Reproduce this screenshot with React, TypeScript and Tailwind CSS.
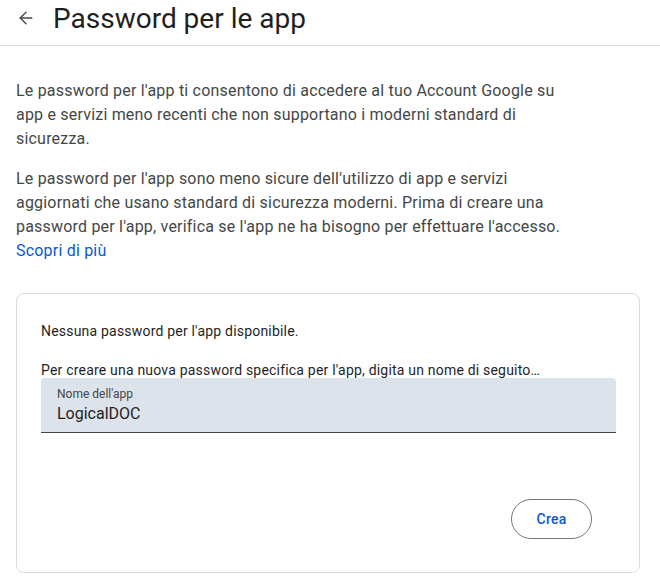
import { ArrowLeft } from 'lucide-react';

const font = { fontFamily: 'Roboto, "Noto Sans", Arial, sans-serif' };

export default function App() {
  return (
    <main className="h-[580px] w-[660px] overflow-hidden bg-white text-[#1f1f1f]" style={font}>
      <header className="flex h-[46px] items-center gap-[17px] border-b border-[#dadce0] pl-[16px]">
        <ArrowLeft size={20} strokeWidth={1.6} className="-mt-[9px] text-[#444746]" />
        <h1 className="-mt-[7px] text-[28px] leading-[36px] text-[#1f1f1f]">Password per le app</h1>
      </header>

      <section className="px-4 pt-[33px] text-[16px] leading-[24px] tracking-[0.2px] text-[#444746]">
        <p className="max-w-[552px]">
          Le password per l'app ti consentono di accedere al tuo Account Google su app e servizi meno recenti che non
          supportano i moderni standard di sicurezza.
        </p>
        <p className="mt-[16px] max-w-[552px]">
          Le password per l'app sono meno sicure dell'utilizzo di app e servizi aggiornati che usano standard di
          sicurezza moderni. Prima di creare una password per l'app, verifica se l'app ne ha bisogno per effettuare
          l'accesso.
        </p>
        <a className="block text-[#0b57d0]">Scopri di più</a>
      </section>

      <section className="mx-4 mt-[30px] flex h-[280px] w-[624px] flex-col rounded-lg border border-[#dadce0] px-6 pt-[27px] tracking-[0.2px]">
        <p className="text-[14px] leading-[20px] text-[#1f1f1f]">Nessuna password per l'app disponibile.</p>
        <p className="mt-[19px] text-[14px] leading-[20px] text-[#1f1f1f]">
          Per creare una nuova password specifica per l'app, digita un nome di seguito…
        </p>
        <div className="-mt-[2px] h-[55px] w-[575px] rounded-t border-b border-[#444746] bg-[#dde3ea] px-4 pt-[8px] tracking-normal">
          <p className="text-[12px] leading-[16px] text-[#444746]">Nome dell'app</p>
          <p className="text-[16px] leading-[24px] text-[#1f1f1f]">LogicalDOC</p>
        </div>
        <div className="mt-[66px] flex justify-end pr-[23px]">
          <button className="h-[40px] w-[81px] rounded-full border border-[#747775] text-[14px] font-medium text-[#0b57d0]">
            Crea
          </button>
        </div>
      </section>
    </main>
  );
}
